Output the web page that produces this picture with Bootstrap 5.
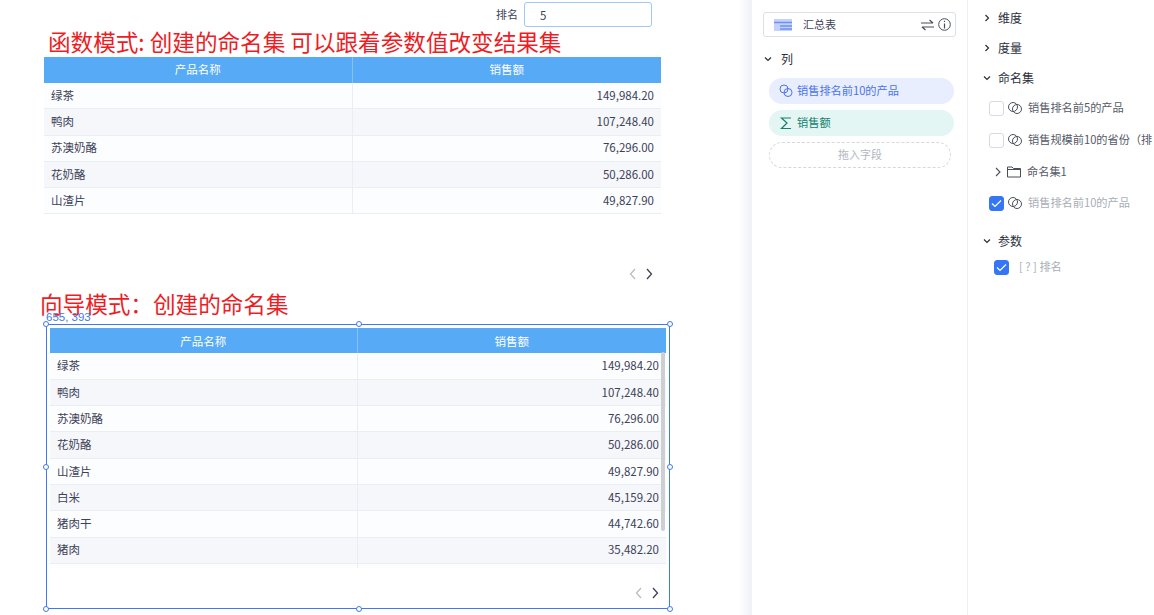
<!DOCTYPE html>
<html lang="zh">
<head>
<meta charset="utf-8">
<title>命名集</title>
<link href="https://cdn.jsdelivr.net/npm/bootstrap@5.3.0/dist/css/bootstrap.min.css" rel="stylesheet">
<style>
html,body{height:615px;overflow:hidden;background:#fff}
body{font-family:"Noto Sans CJK SC","Noto Sans",sans-serif;font-size:12px;color:#3c4257;line-height:1.4}
.shell{height:615px;width:1154px}
.canvas{width:738px;flex:none;padding-top:2px;position:relative}
.shadow-gap{width:14px;flex:none;background:linear-gradient(to right,#fff,#f0f1f6)}
.midpane{width:216px;flex:none;padding:12px 11px 0 11px;border-right:1px solid #eceef3}
.rightpane{width:186px;flex:none;padding-left:14px;overflow:hidden}
svg{flex:none}
.param-row{width:652px;height:25px;font-size:11px}
.param-input{width:128px;height:25px;border:1px solid #9bc8f8;border-radius:3px;padding-left:15px;margin-left:6px;color:#3c4257;font-size:11.5px;line-height:24px}
.red-title{color:#ee1c25;font-size:22.6px;line-height:30px;white-space:nowrap;font-weight:400}
.t1{margin-left:48px;height:30px}
.t2{margin-left:40px;height:26px;line-height:26px;margin-top:7px}
.grid-a{margin-left:44px;width:617px}
.grid-b{width:616px}
.sheet{border-collapse:collapse;table-layout:fixed;width:100%;font-size:11.5px}
.col-first{width:308px}
.grid-b .col-first{width:307px}
.sheet th{background:#57aaf5;color:#fff;font-weight:400;text-align:center;height:25.5px;padding:0;border-right:1px solid #85c0f7;line-height:25px}
.grid-b .sheet th{height:24.5px;line-height:24px}
.sheet th:last-child{border-right:0}
.sheet td{height:26.3px;padding:0 7px;line-height:1;border-bottom:1px solid #e9edf4;border-right:1px solid #e9edf4;background:#fcfdff;color:#3c4257}
.sheet td:last-child{border-right:0;text-align:right}
.sheet tr:nth-child(even) td{background:#f6f7fb}
.pager{height:20px;color:#3c4257}
.pg-a{width:661px;margin-top:50px;padding-right:8px}
.pg-b{padding-right:7px;margin-top:15px}
.frame{margin-left:46px;width:624px;height:285px;border:1px solid #3f78f0;margin-top:7px;padding:3px 3px 0 3px;position:relative}
.coords{position:absolute;left:-1px;top:-15px;color:#3f78f0;font-size:11.5px;line-height:14px;font-family:"Liberation Sans",sans-serif}
.knob{position:absolute;width:6px;height:6px;background:#fff;border:1px solid #3f78f0;border-radius:50%}
.k1{left:-4px;top:-4px}.k2{left:309px;top:-4px}.k3{right:-4px;top:-4px}
.k4{left:-4px;top:139px}.k5{right:-4px;top:139px}
.k6{left:-4px;bottom:-4px}.k7{left:309px;bottom:-4px}.k8{right:-4px;bottom:-4px}
.rows-clip{height:240px;overflow:hidden;position:relative}
.thumb{position:absolute;right:1px;top:24px;width:4px;height:179px;background:#cfcfd1;border-radius:2px}
.type-box{height:25px;border:1px solid #dcdfe8;border-radius:3px;padding:0 0 0 10px}
.type-name{margin-left:11px;flex:1;color:#3c4257;font-size:11px}
.sec-head{color:#2b2f3c;font-size:12px;line-height:17px}
.caret{width:10px;height:10px;flex:none}
.gap-head{gap:6px}
.pill{height:26px;border-radius:13px;padding-left:10px;margin-left:6px;width:185px;font-size:11.2px;gap:4px;white-space:nowrap}
.pill-blue{background:#e8eefe;color:#4a73e8;margin-top:11px}
.pill-green{background:#e3f6f3;color:#14806e;margin-top:6px}
.drop-zone{height:26px;border:1px dashed #d5d8e0;border-radius:13px;margin-left:6px;width:182px;color:#b4b7bf;font-size:11px;margin-top:6px}
.head-gap{margin-top:13px}
.tree-row{height:30px;white-space:nowrap;font-size:11.2px;color:#555a68;gap:4px}
.box{width:15px;height:15px;flex:none;border:1px solid #d6d9e4;border-radius:3px;background:#fff}
.box-on{background:#3576f6;border-color:#3576f6}
.muted-txt{color:#a9adb6}
.pad-branch{padding-left:11px}
.pad-item{padding-left:7px}
.pad-param{padding-left:12px;gap:10px;margin-top:3px}
.mt-first{margin-top:7px}
.mt-next{margin-top:2px}
.mt-last{margin-top:1px}
.mt-top{margin-top:9px}
.mt-col{margin-top:13px}
.mt-param{margin-top:14px}
.icon-gap{margin-right:2px}
</style>
</head>
<body>
<div class="shell d-flex">
  <main class="canvas">
    <div class="param-row d-flex justify-content-end align-items-center">
      <span>排名</span><div class="param-input">5</div>
    </div>
    <div class="red-title t1">函数模式: 创建的命名集 可以跟着参数值改变结果集</div>
    <div class="grid-a">
      <table class="sheet">
        <thead><tr><th class="col-first">产品名称</th><th>销售额</th></tr></thead>
        <tbody>
          <tr><td>绿茶</td><td>149,984.20</td></tr>
          <tr><td>鸭肉</td><td>107,248.40</td></tr>
          <tr><td>苏澳奶酪</td><td>76,296.00</td></tr>
          <tr><td>花奶酪</td><td>50,286.00</td></tr>
          <tr><td>山渣片</td><td>49,827.90</td></tr>
        </tbody>
      </table>
    </div>
    <div class="pager pg-a d-flex justify-content-end align-items-center gap-2">
      <svg width="8" height="12" viewBox="0 0 8 12"><path d="M6 1 1.500 6 6 11" fill="none" stroke="#b9bcc4" stroke-width="1.300"/></svg>
      <svg width="8" height="12" viewBox="0 0 8 12"><path d="M2 1 6.500 6 2 11" fill="none" stroke="#3c4257" stroke-width="1.300"/></svg>
    </div>
    <div class="red-title t2">向导模式：创建的命名集</div>
    <div class="frame">
      <span class="coords">655, 393</span>
      <span class="knob k1"></span><span class="knob k2"></span><span class="knob k3"></span><span class="knob k4"></span><span class="knob k5"></span><span class="knob k6"></span><span class="knob k7"></span><span class="knob k8"></span>
      <div class="grid-b rows-clip">
        <table class="sheet">
          <thead><tr><th class="col-first">产品名称</th><th>销售额</th></tr></thead>
          <tbody>
            <tr><td>绿茶</td><td>149,984.20</td></tr>
            <tr><td>鸭肉</td><td>107,248.40</td></tr>
            <tr><td>苏澳奶酪</td><td>76,296.00</td></tr>
            <tr><td>花奶酪</td><td>50,286.00</td></tr>
            <tr><td>山渣片</td><td>49,827.90</td></tr>
            <tr><td>白米</td><td>45,159.20</td></tr>
            <tr><td>猪肉干</td><td>44,742.60</td></tr>
            <tr><td>猪肉</td><td>35,482.20</td></tr>
            <tr><td>&nbsp;</td><td>&nbsp;</td></tr>
          </tbody>
        </table>
        <div class="thumb"></div>
      </div>
      <div class="pager pg-b d-flex justify-content-end align-items-center gap-2">
        <svg width="8" height="12" viewBox="0 0 8 12"><path d="M6 1 1.500 6 6 11" fill="none" stroke="#b9bcc4" stroke-width="1.300"/></svg>
        <svg width="8" height="12" viewBox="0 0 8 12"><path d="M2 1 6.500 6 2 11" fill="none" stroke="#3c4257" stroke-width="1.300"/></svg>
      </div>
    </div>
  </main>
  <div class="shadow-gap"></div>
  <aside class="midpane">
    <div class="type-box d-flex align-items-center">
      <svg width="18" height="12" viewBox="0 0 18 12"><rect width="18" height="12" fill="#c3d2fb"/><path d="M0 3.500h18M6 7h12M6 10h12" stroke="#6f8ff0" stroke-width="1.500"/></svg>
      <span class="type-name">汇总表</span>
      <svg width="13" height="12" viewBox="0 0 13 12"><path d="M0 4h12M8.500 1l3.500 3M13 8H1M4.500 11 1 8" fill="none" stroke="#4a4e5a" stroke-width="1.200"/></svg>
      <svg class="ms-1 me-1" width="13" height="13" viewBox="0 0 13 13"><circle cx="6.500" cy="6.500" r="5.800" fill="none" stroke="#4a4e5a"/><path d="M6.500 5.500V10.500M6.500 2.800V4" stroke="#4a4e5a" stroke-width="1.200"/></svg>
    </div>
    <div class="sec-head d-flex align-items-center gap-2 mt-col">
      <svg class="caret" viewBox="0 0 10 10"><path d="M2 3.500 5 6.500 8 3.500" fill="none" stroke="#2b2f3c" stroke-width="1.200"/></svg><span>列</span>
    </div>
    <div class="pill pill-blue d-flex align-items-center">
      <svg width="14" height="14" viewBox="0 0 14 14" fill="none" stroke="#4a73e8"><circle cx="5" cy="5" r="4"/><circle cx="9" cy="8.500" r="4"/></svg><span>销售排名前10的产品</span>
    </div>
    <div class="pill pill-green d-flex align-items-center">
      <svg width="14" height="14" viewBox="0 0 14 14" fill="none" stroke="#14806e" stroke-width="1.200"><path d="M12 2H2.500L8 7 2.500 12.500H12"/></svg><span>销售额</span>
    </div>
    <div class="drop-zone d-flex align-items-center justify-content-center">拖入字段</div>
  </aside>
  <aside class="rightpane">
    <div class="sec-head d-flex align-items-center gap-head mt-top">
      <svg class="caret" viewBox="0 0 10 10"><path d="M3.500 2 6.500 5 3.500 8" fill="none" stroke="#2b2f3c" stroke-width="1.200"/></svg><span>维度</span>
    </div>
    <div class="sec-head head-gap d-flex align-items-center gap-head">
      <svg class="caret" viewBox="0 0 10 10"><path d="M3.500 2 6.500 5 3.500 8" fill="none" stroke="#2b2f3c" stroke-width="1.200"/></svg><span>度量</span>
    </div>
    <div class="sec-head head-gap d-flex align-items-center gap-head">
      <svg class="caret" viewBox="0 0 10 10"><path d="M2 3.500 5 6.500 8 3.500" fill="none" stroke="#2b2f3c" stroke-width="1.200"/></svg><span>命名集</span>
    </div>
    <div class="tree-row d-flex align-items-center pad-item mt-first">
      <span class="box"></span>
      <svg class="icon-gap" width="14" height="12" viewBox="0 0 14 12" fill="none" stroke="#4a4e5a"><circle cx="5" cy="5" r="4.500"/><circle cx="9" cy="7" r="4.500"/></svg><span>销售排名前5的产品</span>
    </div>
    <div class="tree-row d-flex align-items-center pad-item mt-next">
      <span class="box"></span>
      <svg class="icon-gap" width="14" height="12" viewBox="0 0 14 12" fill="none" stroke="#4a4e5a"><circle cx="5" cy="5" r="4.500"/><circle cx="9" cy="7" r="4.500"/></svg><span>销售规模前10的省份（排</span>
    </div>
    <div class="tree-row d-flex align-items-center pad-branch mt-next">
      <svg width="10" height="10" viewBox="0 0 10 10"><path d="M3 1 7 5 3 9" fill="none" stroke="#4a4e5a" stroke-width="1.100"/></svg>
      <svg class="icon-gap" width="14" height="12" viewBox="0 0 14 12" fill="none" stroke="#4a4e5a"><path d="M.5 11V1H5L6.500 2.500H13.500V11ZM.5 3.500H13.500"/></svg><span>命名集1</span>
    </div>
    <div class="tree-row d-flex align-items-center pad-item muted-txt mt-last">
      <span class="box box-on d-flex align-items-center justify-content-center"><svg width="11" height="9" viewBox="0 0 11 9"><path d="M1 4.500 4 7.500 10 1.500" fill="none" stroke="#fff" stroke-width="1.200"/></svg></span>
      <svg class="icon-gap" width="14" height="12" viewBox="0 0 14 12" fill="none" stroke="#4a4e5a"><circle cx="5" cy="5" r="4.500"/><circle cx="9" cy="7" r="4.500"/></svg><span>销售排名前10的产品</span>
    </div>
    <div class="sec-head d-flex align-items-center gap-head mt-param">
      <svg class="caret" viewBox="0 0 10 10"><path d="M2 3.500 5 6.500 8 3.500" fill="none" stroke="#2b2f3c" stroke-width="1.200"/></svg><span>参数</span>
    </div>
    <div class="tree-row d-flex align-items-center muted-txt pad-param">
      <span class="box box-on d-flex align-items-center justify-content-center"><svg width="11" height="9" viewBox="0 0 11 9"><path d="M1 4.500 4 7.500 10 1.500" fill="none" stroke="#fff" stroke-width="1.200"/></svg></span>
      <span>[ ? ] 排名</span>
    </div>
  </aside>
</div>
</body>
</html>
